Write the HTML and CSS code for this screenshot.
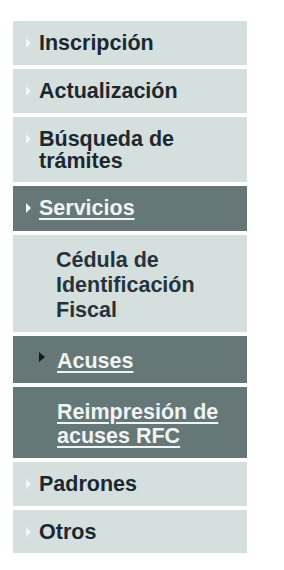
FILE: index.html
```html
<!DOCTYPE html>
<html lang="es">
<head>
<meta charset="utf-8">
<title>Menú</title>
<link rel="stylesheet" href="styles.css">
</head>
<body>
<nav class="menu">
  <ul class="list">
    <li class="item light h44"><span class="arrow arrow-faint"></span><span class="label">Inscripción</span></li>
    <li class="item light h44"><span class="arrow arrow-faint"></span><span class="label">Actualización</span></li>
    <li class="item light two"><span class="arrow arrow-faint"></span><span class="label">Búsqueda de<br>trámites</span></li>
    <li class="item dark h45"><span class="arrow arrow-white"></span><a class="label link" href="#">Servicios</a></li>
    <li class="item light sub cedula"><span class="label">Cédula de<br>Identificación<br>Fiscal</span></li>
    <li class="item dark sub acuses"><span class="arrow arrow-black"></span><a class="label link" href="#">Acuses</a></li>
    <li class="item dark sub reimp"><a class="label link" href="#">Reimpresión de<br>acuses RFC</a></li>
    <li class="item light h44"><span class="arrow arrow-faint"></span><span class="label">Padrones</span></li>
    <li class="item light h43"><span class="arrow arrow-faint"></span><span class="label">Otros</span></li>
  </ul>
</nav>
</body>
</html>
```

FILE: styles.css
```css
html, body {
  margin: 0;
  padding: 0;
  background: #ffffff;
}

body {
  font-family: "Liberation Sans", Arial, sans-serif;
}

.menu {
  padding: 21px 0 0 13px;
}

.list {
  list-style: none;
  margin: 0;
  padding: 0;
  width: 234px;
  display: flex;
  flex-direction: column;
  gap: 4px;
}

.item {
  box-sizing: border-box;
  display: flex;
  align-items: flex-start;
  padding: 11px 8px 0 13px;
  font-size: 21.5px;
  font-weight: bold;
  line-height: 23px;
}

.light {
  background: #d5dfde;
  color: #1c2830;
}

.dark {
  background: #657777;
  color: #f1f4f4;
}

.h44 { height: 44px; }
.h43 { height: 43px; }
.h45 { height: 45px; }

.two {
  height: 65px;
  line-height: 22px;
}

.sub {
  padding-left: 26px;
}

.cedula {
  height: 97px;
  padding-top: 13px;
  padding-left: 43px;
  line-height: 25px;
  color: #26333a;
}

.acuses {
  height: 47px;
  padding-top: 14px;
}

.reimp {
  height: 71px;
  padding-top: 13px;
  padding-left: 44px;
  line-height: 24px;
}

.arrow {
  flex: 0 0 13px;
  height: 10px;
  margin-top: 6px;
}

.arrow::before {
  content: "";
  display: block;
  width: 0;
  height: 0;
  border-top: 5px solid transparent;
  border-bottom: 5px solid transparent;
  border-left: 5px solid #f2f6f6;
}

.arrow-white::before {
  border-left-color: #f4f7f7;
}

.arrow-black {
  flex-basis: 18px;
  margin-top: 2px;
}

.arrow-black::before {
  border-left: 6px solid #15191c;
}

.label {
  display: block;
}

.link {
  color: #f1f4f4;
  text-decoration: underline;
  text-decoration-thickness: 2px;
  text-underline-offset: 3px;
}
```
